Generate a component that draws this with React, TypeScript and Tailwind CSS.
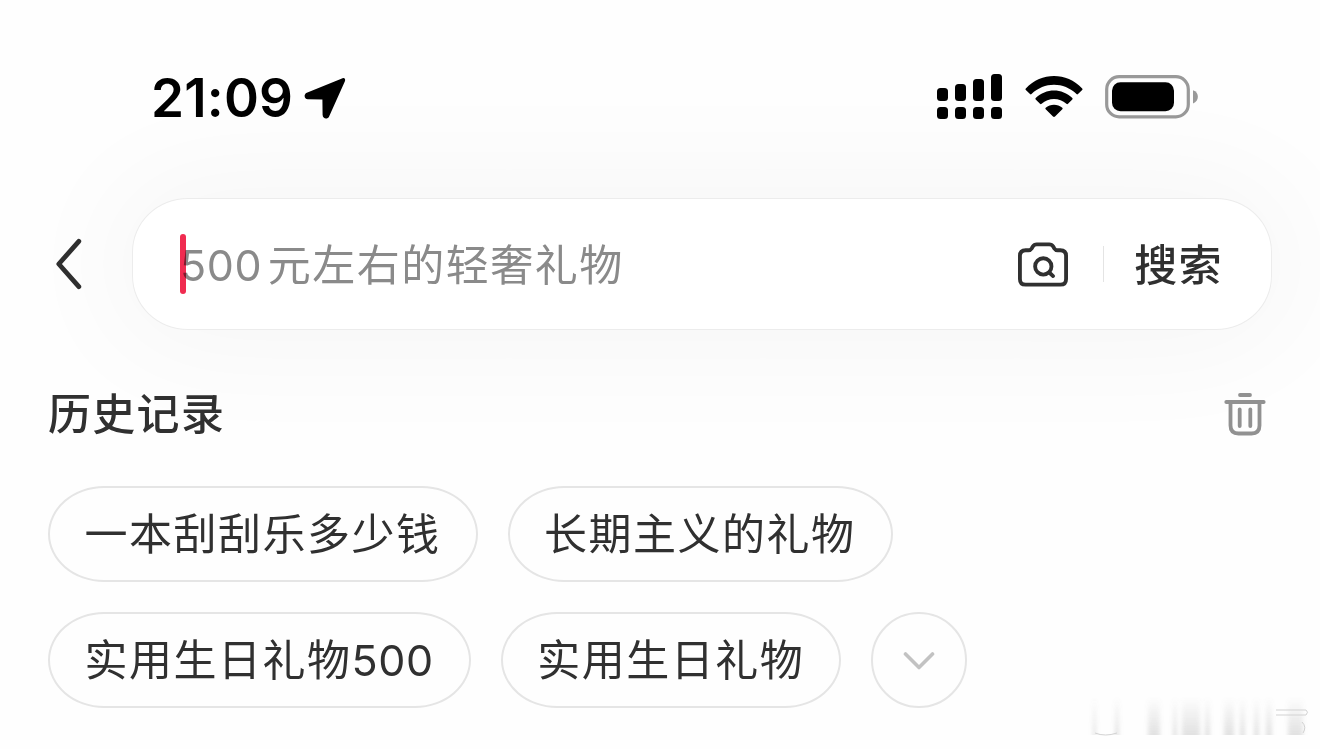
import { useState } from "react"

type HistoryItem = {
  id: number
  label: string
}

const historyRows: HistoryItem[][] = [
  [
    { id: 1, label: "一本刮刮乐多少钱" },
    { id: 2, label: "长期主义的礼物" },
  ],
  [
    { id: 3, label: "实用生日礼物500" },
    { id: 4, label: "实用生日礼物" },
  ],
]

// Digits are set a little tighter than the Chinese characters
function MixedText({ text }: { text: string }) {
  return (
    <>
      {text.split(/(\d+)/).map((part, index) =>
        /^\d+$/.test(part) ? (
          <span key={index} className="tracking-[0.6px]">
            {part}
          </span>
        ) : (
          part
        ),
      )}
    </>
  )
}

function StatusBar() {
  return (
    <div className="flex h-[45px] items-center justify-between pl-[151px] pr-[121px] text-black">
      <div className="flex items-center">
        <span className="w-[153px] pt-[2px] text-[53px] leading-[45px] font-semibold tracking-[0.2px]">21:09</span>
        <svg className="h-[42px] w-[42px]" viewBox="0 0 42 42" fill="currentColor">
          <path d="M38.6 1.2 L2.8 15.8 C-0.6 17.3 0.2 22.2 3.8 22.3 L18.4 22.5 L18.6 37.8 C18.7 42.2 23.7 42.6 25.1 39.4 L40.8 4.4 C41.8 2 40.4 .5 38.6 1.2Z" />
        </svg>
      </div>
      <div className="flex items-center pb-[2px]">
        <svg className="h-[46px] w-[66px]" viewBox="0 0 66 46" fill="currentColor">
          <rect x="0" y="14" width="11" height="13" rx="3.5" />
          <rect x="18" y="10" width="11" height="17" rx="3.5" />
          <rect x="36" y="5" width="11" height="22" rx="3.5" />
          <rect x="54" y="0" width="11" height="27" rx="3.5" />
          <rect x="0" y="33" width="11" height="12" rx="3.5" />
          <rect x="18" y="33" width="11" height="12" rx="3.5" />
          <rect x="36" y="33" width="11" height="12" rx="3.5" />
          <rect x="54" y="33" width="11" height="12" rx="3.5" />
        </svg>
        <svg className="ml-[22px] h-[44px] w-[58px]" viewBox="0 0 58 44" fill="currentColor">
          <path d="M0.8 13.4 C16.5 -3.2 41.5 -3.2 57.2 13.4 Q57.9 14.2 57.2 14.9 L53 19.1 Q52.2 19.8 51.5 19.1 C38.8 6.7 19.2 6.7 6.5 19.1 Q5.8 19.8 5 19.1 L0.8 14.9 Q0.1 14.2 0.8 13.4Z" />
          <path d="M10.7 23.1 C21 12.9 37 12.9 47.3 23.1 Q48 23.9 47.3 24.6 L43 28.8 Q42.2 29.5 41.4 28.8 C34.5 22.5 23.5 22.5 16.6 28.8 Q15.8 29.5 15 28.8 L10.7 24.6 Q10 23.9 10.7 23.1Z" />
          <path d="M20.7 32.8 C25.4 28.8 32.6 28.8 37.3 32.8 Q38.1 33.6 37.3 34.3 L30 41.6 Q29 42.5 28 41.6 L20.7 34.3 Q19.9 33.6 20.7 32.8Z" />
        </svg>
        <svg className="ml-[22px] h-[44px] w-[94px]" viewBox="0 0 94 44">
          <rect x="1.7" y="1.7" width="81.6" height="40.2" rx="12.5" fill="none" stroke="#999" strokeWidth="3.2" />
          <rect x="7" y="7.2" width="62" height="29" rx="8.5" fill="#000" />
          <path d="M88 15.2 C94.5 16.9 94.5 26.7 88 28.4Z" fill="#999" />
        </svg>
      </div>
    </div>
  )
}

function SearchBar() {
  const [query, setQuery] = useState("")

  return (
    <div className="flex items-center pl-[54px]">
      <button className="w-[78px]">
        <svg className="h-[52px] w-[29px]" viewBox="0 0 29 52" fill="none" stroke="#303030" strokeWidth="4.8" strokeLinecap="round" strokeLinejoin="round">
          <path d="M24.8 3.4 L4.8 26 L24.8 48.6" />
        </svg>
      </button>
      <div className="flex h-[132px] w-[1140px] items-center rounded-[56px/54px] border-[1.5px] border-[#ececec] bg-white pl-[47px] shadow-[0_0_120px_20px_rgba(0,0,0,0.036)]">
        <div className="relative flex h-[60px] flex-1 items-center">
          <input
            value={query}
            onChange={(e) => setQuery(e.target.value)}
            className="h-[60px] w-full pl-px text-[43px] tracking-[1.5px] text-[#303030] outline-none"
          />
          {!query && (
            <span className="pointer-events-none absolute top-px left-0 text-[43px] leading-[60px] tracking-[1.5px] whitespace-nowrap text-[#8a8a8a] [word-spacing:-8px]">
              <MixedText text="500 元左右的轻奢礼物" />
            </span>
          )}
          <span className="absolute top-0 left-0 h-[60px] w-[6px] rounded-full bg-[#f02b50] mix-blend-multiply" />
        </div>
        <svg className="mr-px h-[45px] w-[50px]" viewBox="0 0 52 46" fill="none" stroke="#303030" strokeWidth="4" strokeLinejoin="round" strokeLinecap="round">
          <path d="M8 8.2 H10.8 Q13 8.2 14.2 6.3 L15.4 4.3 Q16.8 2 19.5 2 H32.5 Q35.2 2 36.6 4.3 L37.8 6.3 Q39 8.2 41.2 8.2 H44 Q50 8.2 50 14.2 V38 Q50 44 44 44 H8 Q2 44 2 38 V14.2 Q2 8.2 8 8.2Z" />
          <circle cx="26.3" cy="25" r="8.5" />
          <path d="M32.5 31.3 L36.5 35" />
        </svg>
        <div className="ml-[34px] h-9 w-px bg-[#e4e4e4]" />
        <button className="mr-[48px] ml-[30px] pt-[2px] text-[43px] leading-none font-medium tracking-[1.4px] text-[#303030]">搜索</button>
      </div>
    </div>
  )
}

function HistoryPill({ label }: { label: string }) {
  return (
    <button className="h-24 rounded-[56px/48px] border-2 border-[#e5e5e5] pr-[35px] pl-[34.5px] text-[43px] leading-none tracking-[1.5px] text-[#303030]">
      <MixedText text={label} />
    </button>
  )
}

// Faded strip in the bottom right corner
function Smudge() {
  return (
    <svg className="absolute right-[8px] bottom-[10px] h-[42px] w-[226px]" viewBox="0 0 226 42">
      <defs>
        <linearGradient id="fade" x1="0" y1="0" x2="0" y2="1">
          <stop offset="0" stopColor="#888" stopOpacity="0" />
          <stop offset="1" stopColor="#888" stopOpacity="0.24" />
        </linearGradient>
        <filter id="soft">
          <feGaussianBlur stdDeviation="2.2 0.3" />
        </filter>
      </defs>
      <g fill="url(#fade)" filter="url(#soft)">
        <rect x="7" y="0" width="3" height="38" />
        <rect x="29" y="0" width="4" height="38" />
        <rect x="62" y="0" width="12" height="38" />
        <rect x="87" y="0" width="4" height="38" />
        <rect x="96" y="0" width="18" height="38" />
        <rect x="119" y="0" width="5" height="38" />
        <rect x="138" y="0" width="10" height="38" />
        <rect x="154" y="0" width="5" height="38" />
        <rect x="168" y="0" width="5" height="38" />
        <rect x="180" y="0" width="6" height="38" />
        <rect x="202" y="0" width="15" height="38" />
      </g>
      <g fill="none" stroke="#d2d2d2" strokeWidth="1">
        <path d="M9 36 Q19 40 31 36" />
        <path d="M190 13 H220 Q223 15 220 18 H190" />
        <path d="M216 25 Q221 30 217 36" />
      </g>
    </svg>
  )
}

export default function App() {
  return (
    <div className="relative h-[749px] w-[1320px] overflow-hidden bg-[#fefefe] pt-[75px] font-[Inter,'Noto_Sans_CJK_SC',sans-serif]">
      <StatusBar />
      <div className="mt-[78px]">
        <SearchBar />
      </div>

      <div className="relative mt-[59px] flex h-[50px] items-center justify-between pr-[54px] pl-12">
        <h2 className="text-[43px] leading-none font-medium tracking-[1.3px] text-[#303030]">历史记录</h2>
        <button>
          <svg className="h-[44px] w-[42px]" viewBox="0 0 42 44" fill="none" stroke="#919191" strokeWidth="3.8" strokeLinecap="round">
            <path d="M16 3 H26" />
            <path d="M2.3 10 H39.7" />
            <path d="M6.5 10 V33.5 Q6.5 41.5 14.5 41.5 H27.5 Q35.5 41.5 35.5 33.5 V10" />
            <path d="M15.7 17.5 V34" />
            <path d="M26.3 17.5 V34" />
          </svg>
        </button>
      </div>

      <div className="relative mt-[47px] flex flex-col gap-[30px] pl-12">
        {historyRows.map((row, index) => (
          <div key={index} className="flex gap-[30px]">
            {row.map((item) => (
              <HistoryPill key={item.id} label={item.label} />
            ))}
            {index === historyRows.length - 1 && (
              <button className="flex h-24 w-24 items-center justify-center rounded-full border-2 border-[#e5e5e5] pt-[2px]">
                <svg className="h-[20px] w-[32px]" viewBox="0 0 32 20" fill="none" stroke="#c2c2c2" strokeWidth="3.6" strokeLinecap="round" strokeLinejoin="round">
                  <path d="M2.5 3 L16 16.5 L29.5 3" />
                </svg>
              </button>
            )}
          </div>
        ))}
      </div>

      <Smudge />
    </div>
  )
}
